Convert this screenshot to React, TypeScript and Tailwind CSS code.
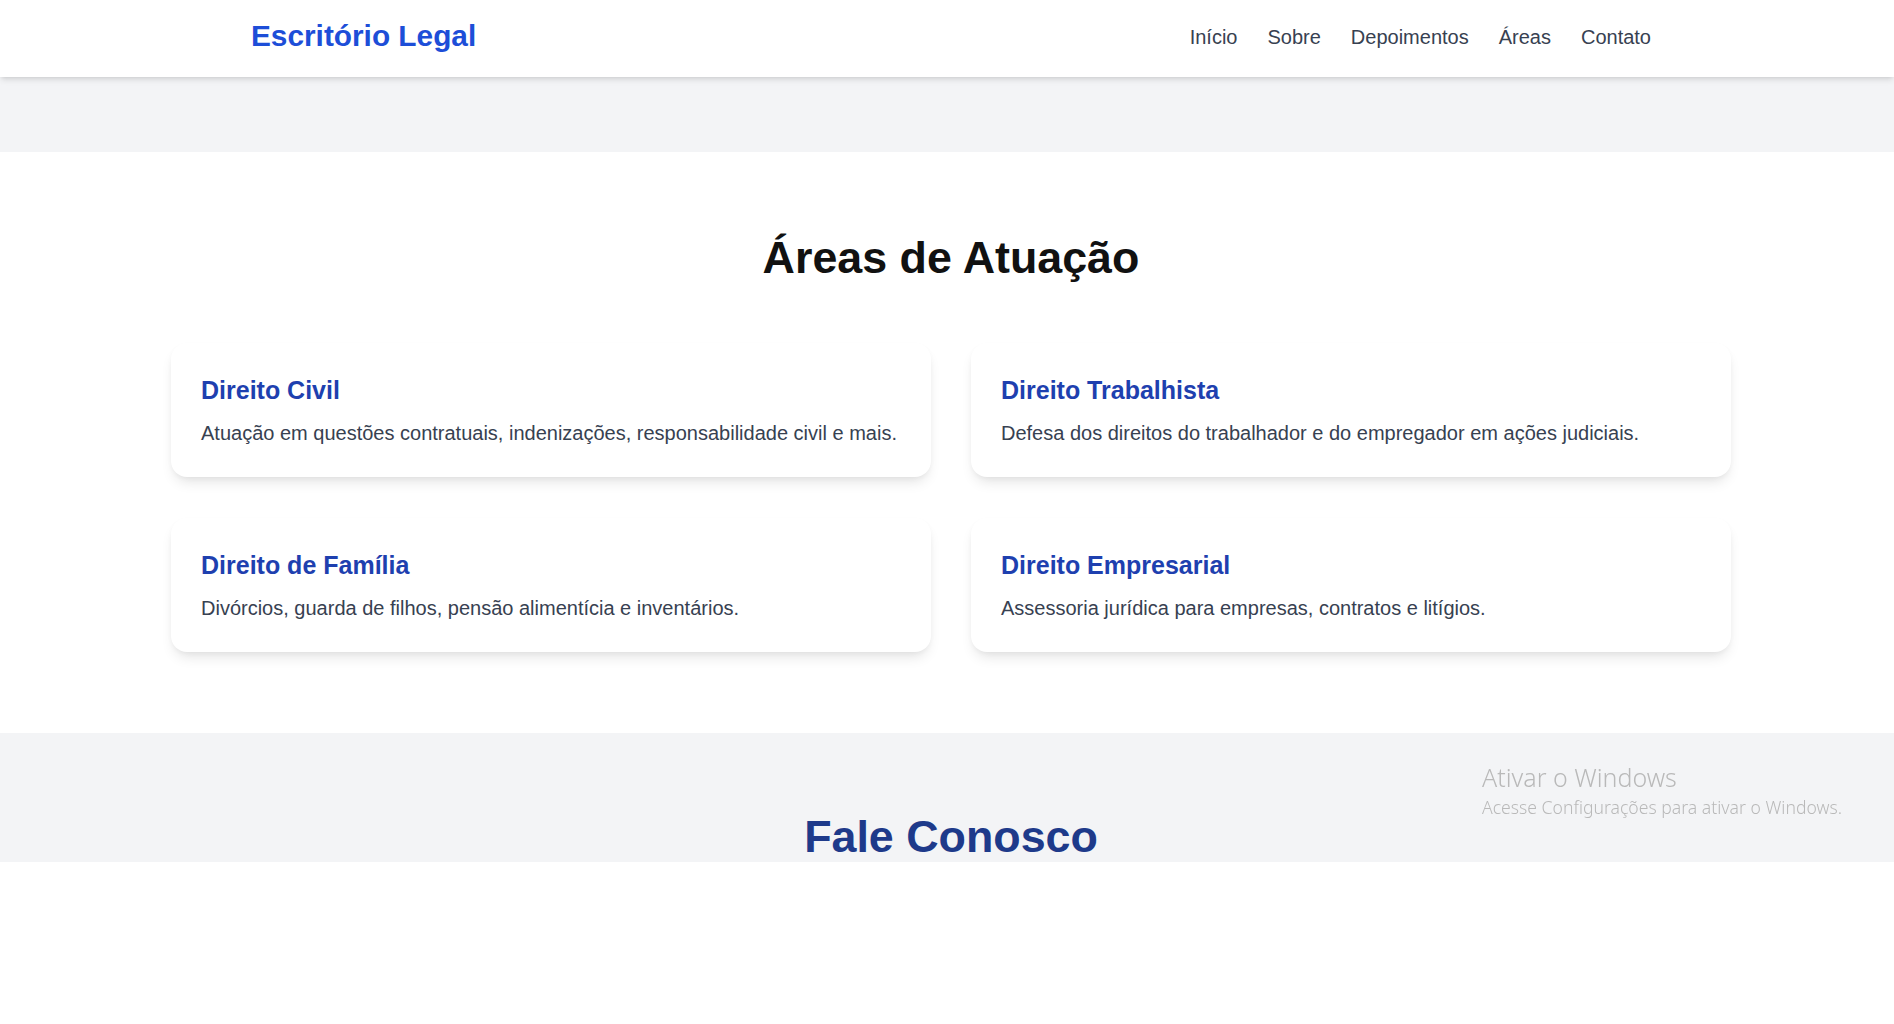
const areas = [
  {
    title: "Direito Civil",
    text: "Atuação em questões contratuais, indenizações, responsabilidade civil e mais.",
  },
  {
    title: "Direito Trabalhista",
    text: "Defesa dos direitos do trabalhador e do empregador em ações judiciais.",
  },
  {
    title: "Direito de Família",
    text: "Divórcios, guarda de filhos, pensão alimentícia e inventários.",
  },
  {
    title: "Direito Empresarial",
    text: "Assessoria jurídica para empresas, contratos e litígios.",
  },
];

const links = ["Início", "Sobre", "Depoimentos", "Áreas", "Contato"];

const App = () => {
  return (
    <div className="min-h-[1024px] bg-white font-['Liberation_Sans',Arial,sans-serif]">
      <header className="relative z-10 bg-white shadow-md">
        <div className="pl-2">
          <div className="mx-auto flex h-[77px] w-[1400px] items-center justify-between pb-[3px]">
            <a className="mb-[2px] text-[29.8px] font-bold text-[#1d4ed8]">Escritório Legal</a>
            <nav className="flex gap-[30px] text-xl text-[#374151]">
              {links.map((l) => (
                <a key={l}>{l}</a>
              ))}
            </nav>
          </div>
        </div>
      </header>

      <section className="h-[75px] bg-gray-100" />

      <section id="areas" className="bg-white pb-[81px] pl-2 pt-[78px]">
        <h2 className="mb-[59px] text-center text-[44.8px] font-bold leading-[54px] text-[#111111]">
          Áreas de Atuação
        </h2>
        <div className="mx-auto grid w-[1560px] grid-cols-2 gap-x-10 gap-y-[41px]">
          {areas.map((a) => (
            <div
              key={a.title}
              className="rounded-2xl bg-white p-[30px] shadow-[0_8px_14px_-4px_rgba(0,0,0,0.12),0_2px_6px_-2px_rgba(0,0,0,0.06)]"
            >
              <h3 className="mb-[11px] text-[25px] font-bold leading-[35px] text-[#1e40af]">{a.title}</h3>
              <p className="text-xl leading-[28px] text-[#374151]">{a.text}</p>
            </div>
          ))}
        </div>
      </section>

      <section id="contato" className="h-[129px] overflow-hidden bg-gray-100 pl-2 pt-[76px]">
        <h2 className="text-center text-[44.8px] font-bold leading-[54px] text-[#1e3a8a]">Fale Conosco</h2>
      </section>

      <div className="pointer-events-none fixed left-[1482px] top-[762px] font-['Noto_Sans',sans-serif] text-[#b9b9b9]">
        <div className="text-[25px] font-light leading-[30px]">Ativar o Windows</div>
        <div className="text-[17.6px] font-light leading-[30px]">Acesse Configurações para ativar o Windows.</div>
      </div>
    </div>
  );
};

export default App;
